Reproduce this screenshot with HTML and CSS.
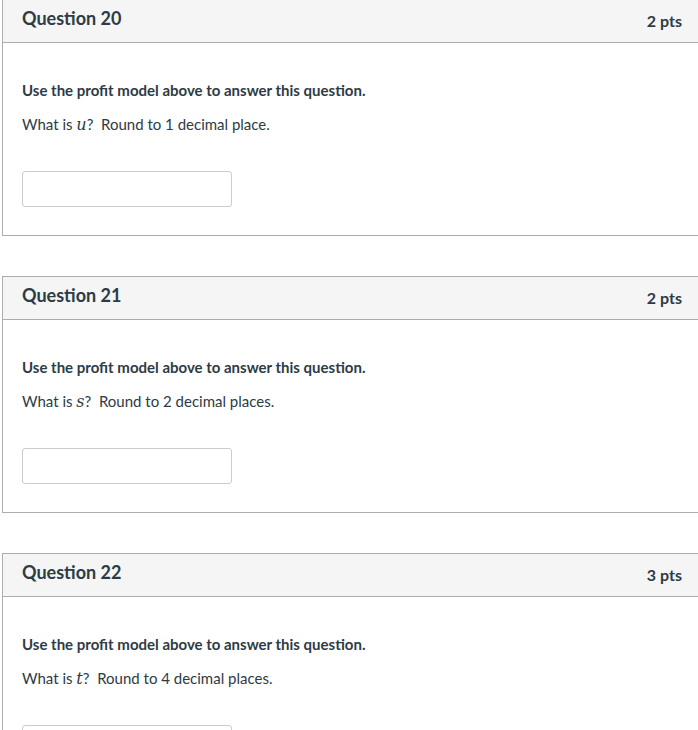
FILE: index.html
```html
<!DOCTYPE html>
<html>
<head>
<meta charset="utf-8">
<link rel="stylesheet" href="styles.css">
</head>
<body>
<div class="quiz">
  <div class="question">
    <div class="q-header">
      <span class="q-name">Question 20</span>
      <span class="q-pts">2 pts</span>
    </div>
    <div class="q-body">
      <p class="lead">Use the profit model above to answer this question.</p>
      <p class="ask">What is <span class="math">u</span>?&nbsp; Round to 1 decimal place.</p>
      <input class="answer" type="text">
    </div>
  </div>
  <div class="question">
    <div class="q-header">
      <span class="q-name">Question 21</span>
      <span class="q-pts">2 pts</span>
    </div>
    <div class="q-body">
      <p class="lead">Use the profit model above to answer this question.</p>
      <p class="ask">What is <span class="math">s</span>?&nbsp; Round to 2 decimal places.</p>
      <input class="answer" type="text">
    </div>
  </div>
  <div class="question">
    <div class="q-header">
      <span class="q-name">Question 22</span>
      <span class="q-pts">3 pts</span>
    </div>
    <div class="q-body">
      <p class="lead">Use the profit model above to answer this question.</p>
      <p class="ask">What is <span class="math">t</span>?&nbsp; Round to 4 decimal places.</p>
      <input class="answer" type="text">
    </div>
  </div>
</div>
</body>
</html>
```

FILE: styles.css
```css
html, body {
  margin: 0;
  padding: 0;
  background: #ffffff;
}
body {
  font-family: Lato, "Liberation Sans", sans-serif;
  color: #2d3b45;
  overflow: hidden;
}
.quiz {
  margin-top: -1px;
  padding-left: 2px;
}
.question {
  width: 700px;
  box-sizing: border-box;
  border: 1px solid #adadad;
  margin-bottom: 40px;
}
.q-header {
  height: 36px;
  padding: 0 19px 6px;
  background: #f5f5f5;
  border-bottom: 1px solid #adadad;
  display: flex;
  align-items: center;
  justify-content: space-between;
}
.q-name {
  font-size: 18px;
  font-weight: 700;
}
.q-pts {
  font-size: 16px;
  font-weight: 700;
  margin-top: 4px;
}
.q-body {
  padding: 37px 19px 28px;
}
.q-body p {
  margin: 0;
  font-size: 15px;
  line-height: 20px;
}
.lead {
  font-weight: 700;
}
.ask {
  margin-top: 14px !important;
}
.math {
  font-family: "DejaVu Serif", "Liberation Serif", serif;
  font-style: italic;
  font-size: 16px;
}
.answer {
  display: block;
  margin: 36px 0 0;
  width: 210px;
  height: 36px;
  box-sizing: border-box;
  border: 1px solid #c7cdd1;
  border-radius: 3px;
  padding: 0 8px;
  font-family: inherit;
  font-size: 14px;
  background: #fff;
  outline: none;
}
```
